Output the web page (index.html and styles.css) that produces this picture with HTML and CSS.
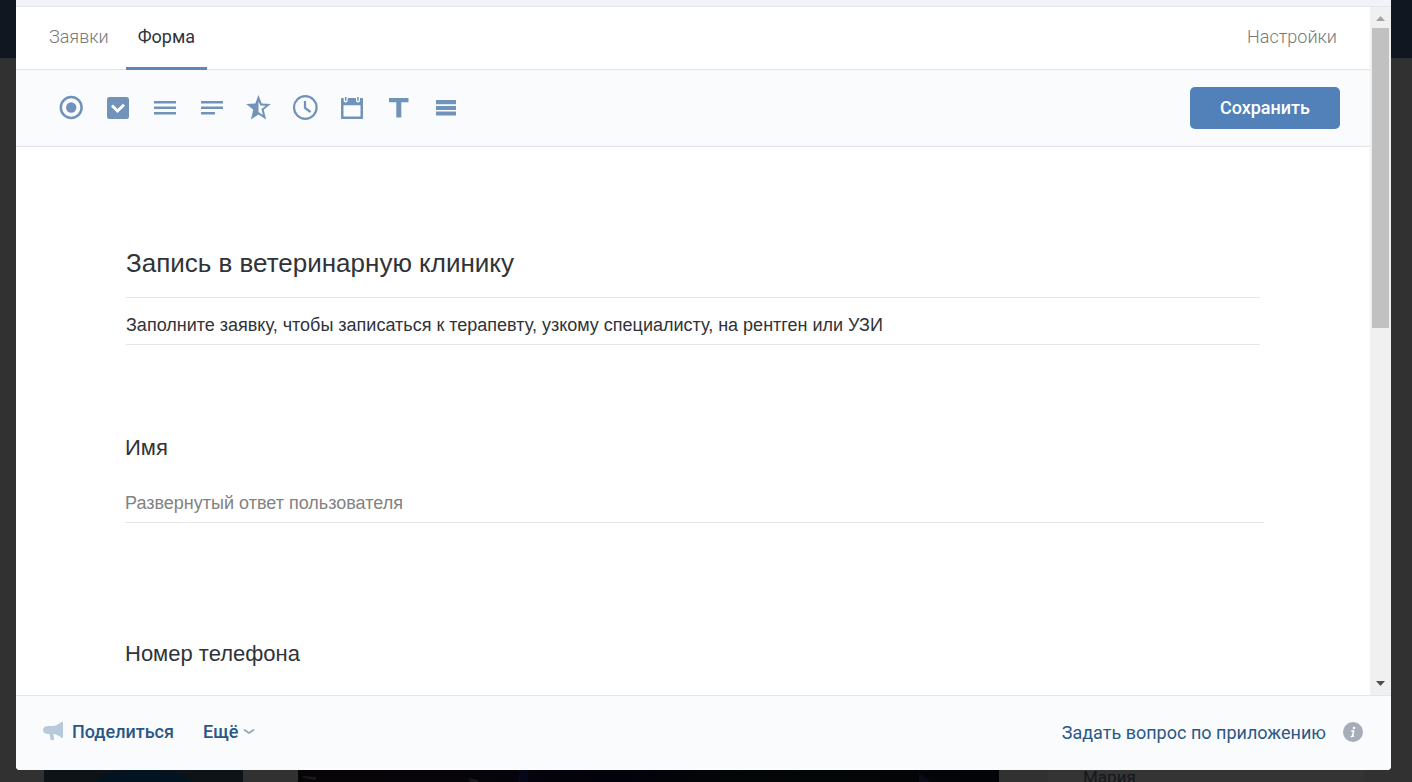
FILE: index.html
```html
<!DOCTYPE html>
<html lang="ru">
<head>
<meta charset="utf-8">
<title>Форма</title>
<link rel="stylesheet" href="styles.css">
</head>
<body>
<div class="page">
  <div class="backdrop" aria-hidden="true">
    <div class="backdrop-header"></div>
    <div class="backdrop-content">
      <div class="backdrop-photo"></div>
      <div class="backdrop-cover">
        <svg width="100%" height="12" viewBox="0 0 700 12" preserveAspectRatio="none">
          <path d="M4 6l14 1v3l-12-2zM170 8l10 2v2h-8z" fill="#19191c"/>
          <path d="M220 0h10v12h-10z" fill="#07071a"/>
          <path d="M620 3l12 9h-12z" fill="#0a0a1c"/>
        </svg>
      </div>
      <div class="backdrop-card">Мария</div>
    </div>
  </div>

  <main class="modal">
    <div class="strip"></div>
    <div class="viewport">
      <div class="content">
        <nav class="tabs">
          <a class="tab" href="#requests">Заявки</a>
          <a class="tab tab-active" href="#form">Форма</a>
          <a class="tab tab-settings" href="#settings">Настройки</a>
        </nav>

        <div class="toolbar">
          <div class="tools">
            <button class="tool" type="button" aria-label="Один вариант"><svg viewBox="0 0 26 26"><circle cx="13.200" cy="12.500" r="10.400" fill="none" stroke="currentColor" stroke-width="2.500"/><circle cx="13.200" cy="12.500" r="5.200" fill="currentColor"/></svg></button>
            <button class="tool" type="button" aria-label="Несколько вариантов"><svg viewBox="0 0 26 26"><rect x="2" y="2" width="22" height="22" rx="2.500" fill="currentColor"/><path d="M7 10.500l5.500 5.500 6.500-6.300" fill="none" stroke="#fff" stroke-width="2.800"/></svg></button>
            <button class="tool" type="button" aria-label="Развернутый ответ"><svg viewBox="0 0 26 26"><path d="M2 6h22v2.500H2zM2 11.500h22v2.500H2zM2 17h22v2.500H2z" fill="currentColor"/></svg></button>
            <button class="tool" type="button" aria-label="Короткий ответ"><svg viewBox="0 0 26 26"><path d="M2 6h22v2.500H2zM2 11.500h22v2.500H2zM2 17h14v2.500H2z" fill="currentColor"/></svg></button>
            <button class="tool" type="button" aria-label="Оценка"><svg viewBox="0 0 26 26"><path fill-rule="evenodd" d="M12.500 0l3.200 8.600 9.100.4-7.100 5.700 2.400 9.900-7.600-5.200-7.600 5.200 2.400-9.900L.2 9l9.100-.4zM12.500 6.500v10.600l4.400 3-1.400-6.100 4.200-3.300-5.300-.3z" fill="currentColor"/></svg></button>
            <button class="tool" type="button" aria-label="Время"><svg viewBox="0 0 26 26" fill="none" stroke="currentColor" stroke-width="2.200"><circle cx="12.300" cy="12.500" r="11.300"/><path d="M12 6v7l5.500 4"/></svg></button>
            <button class="tool" type="button" aria-label="Дата"><svg viewBox="0 0 26 26"><path fill-rule="evenodd" d="M2 3h20q1 0 1 1v19q0 1-1 1H2q-1 0-1-1V4q0-1 1-1zM3.500 10.300v11.200h17V10.300z" fill="currentColor"/><path d="M5.700 1.500v4M18 1.500v4" stroke="#fafbfd" stroke-width="4" stroke-linecap="round"/><path d="M5.700 2v3.800M18 2v3.800" stroke="currentColor" stroke-width="1.600"/></svg></button>
            <button class="tool" type="button" aria-label="Текст"><svg viewBox="0 0 26 26"><path d="M2 3h19.500v4.200H14.300V22.600h-5V7.200H2z" fill="currentColor"/></svg></button>
            <button class="tool" type="button" aria-label="Список"><svg viewBox="0 0 26 26"><path d="M2 5h20v4.300H2zM2 11h20v4H2zM2 16.500h20v3.900H2z" fill="currentColor"/></svg></button>
          </div>
          <button class="save" type="button">Сохранить</button>
        </div>

        <form class="form">
          <div class="intro">
            <input class="field form-title" type="text" aria-label="Название формы" value="Запись в ветеринарную клинику">
            <input class="field form-description" type="text" aria-label="Описание формы" value="Заполните заявку, чтобы записаться к терапевту, узкому специалисту, на рентген или УЗИ">
          </div>
          <div class="question">
            <label class="question-label" for="name">Имя</label>
            <input class="field answer" id="name" type="text" placeholder="Развернутый ответ пользователя">
          </div>
          <div class="question">
            <label class="question-label" for="phone">Номер телефона</label>
            <input class="field answer" id="phone" type="text">
          </div>
        </form>
      </div>

      <div class="scrollbar" aria-hidden="true">
        <svg class="arrow" viewBox="0 0 21 21"><path d="M6 14h9l-4.500-5z" fill="#a3a3a3"/></svg>
        <div class="track"><div class="thumb"></div></div>
        <svg class="arrow" viewBox="0 0 21 21"><path d="M6 7h9l-4.500 5z" fill="#505050"/></svg>
      </div>
    </div>

    <footer class="footer">
      <button class="action" type="button">
        <svg class="horn" viewBox="0 0 22 22"><path d="M6.500 6H10C14 6 17 4 19 2.200Q21 1 21 3v14q0 1.500-1.500.800C17.500 16 15 14.300 11.200 13.900l.9 5.200q.1.700-.6.800l-1.900.3q-.6.100-.8-.5L7.500 14H6C3 14 1 12.500 1 10s2-4 5.500-4z" fill="#b9c9dc"/></svg>
        Поделиться
      </button>
      <button class="action" type="button">
        Ещё
        <svg class="chevron" viewBox="0 0 12 12"><path d="M1.500 5l4.500 3 4.500-3" fill="none" stroke="#93a5bb" stroke-width="1.700" stroke-linecap="round" stroke-linejoin="round"/></svg>
      </button>
      <a class="ask" href="#ask">Задать вопрос по приложению</a>
      <button class="info" type="button" aria-label="Информация"><svg viewBox="0 0 20 20"><circle cx="10" cy="10" r="10" fill="#a6adb8"/><circle cx="11" cy="6" r="1.300" fill="#fff"/><path d="M8.200 9h2.400l-1 5.300h1.400M7.700 14.500h2" fill="none" stroke="#fff" stroke-width="1.500"/></svg></button>
    </footer>
  </main>
</div>
</body>
</html>
```
FILE: styles.css
```css
* {
  box-sizing: border-box;
}

body {
  margin: 0;
  font-family: Roboto, "Liberation Sans", sans-serif;
  font-size: 18px;
}

button {
  border: 0;
  padding: 0;
  background: none;
  font: inherit;
  cursor: pointer;
}

a {
  text-decoration: none;
}

.page {
  position: relative;
  display: flex;
  height: 100vh;
  padding: 0 21px 12px 16px;
  overflow: hidden;
  background: #303130;
}

.backdrop {
  position: absolute;
  inset: 0;
  display: flex;
  flex-direction: column;
  justify-content: space-between;
}

.backdrop-header {
  height: 58px;
  background: #101721;
}

.backdrop-content {
  display: flex;
  height: 12px;
  padding: 0 48px 0 44px;
}

.backdrop-photo {
  width: 199px;
  margin-right: 55px;
  background: radial-gradient(ellipse 50px 14px at 50% 100%, #031421 90%, #0d1316 100%);
}

.backdrop-cover {
  flex: 1;
  margin-right: 49px;
  background: linear-gradient(90deg, #070507, #07050b 25%, #02020c 45%, #040707 65%, #030407);
}

.backdrop-cover svg {
  display: block;
}

.backdrop-card {
  width: 316px;
  padding-left: 35px;
  background: #343434;
  color: #14181d;
  font-size: 17px;
  line-height: 14px;
}

.modal {
  position: relative;
  display: flex;
  flex: 1;
  flex-direction: column;
  min-width: 0;
  overflow: hidden;
  border-radius: 0 0 4px 4px;
  background: #fff;
}

.strip {
  height: 7px;
  border-bottom: 1px solid #e4e6eb;
  background: #f2f3f8;
}

.viewport {
  display: flex;
  flex: 1;
  min-height: 0;
}

.content {
  flex: 1;
  min-width: 0;
  overflow: hidden;
}

.tabs {
  display: flex;
  height: 63px;
  padding: 0 21px;
  border-bottom: 1px solid #dfe2e7;
}

.tab {
  height: 63px;
  padding: 0 12px;
  border-bottom: 3px solid transparent;
  color: #76787a;
  font-weight: 300;
  line-height: 60px;
}

.tab-active {
  margin-left: 5px;
  border-color: #6287ae;
  color: #303338;
  font-weight: 400;
}

.tab-settings {
  margin-left: auto;
}

.toolbar {
  display: flex;
  align-items: center;
  justify-content: space-between;
  height: 77px;
  padding: 0 30px 0 42px;
  border-bottom: 1px solid #dfe2e7;
  background: #fafbfd;
}

.tools {
  display: flex;
  gap: 21px;
}

.tool {
  width: 26px;
  height: 26px;
  color: #7293b9;
}

.tool svg,
.info svg {
  display: block;
}

.save {
  height: 42px;
  padding: 0 30px 2px;
  border-radius: 5px;
  background: #5181b8;
  color: #fff;
  font-weight: 500;
}

.form {
  padding: 90px 106px 0 109px;
  font-family: "Liberation Sans", Arial, sans-serif;
}

.intro {
  display: flex;
  flex-direction: column;
  padding: 0 4px 0 1px;
}

.field {
  display: block;
  width: 100%;
  padding: 0;
  border: 0;
  border-bottom: 1px solid #e5e6e8;
  border-radius: 0;
  outline: 0;
  background: transparent;
  color: #303338;
  font-family: inherit;
}

.form-title {
  height: 61px;
  padding-bottom: 8px;
  font-size: 26px;
}

.form-description {
  height: 47px;
  padding-top: 8px;
  font-size: 18px;
}

.question {
  padding: 90px 0 28px;
}

.question-label {
  display: block;
  color: #303338;
  font-size: 22px;
  line-height: 26px;
}

.answer {
  height: 40px;
  margin-top: 22px;
  padding-top: 2px;
  font-size: 18px;
}

.answer::placeholder {
  color: #828282;
  opacity: 1;
}

.scrollbar {
  display: flex;
  flex-direction: column;
  width: 21px;
  background: #f0f0f0;
}

.arrow {
  flex: none;
  width: 21px;
  height: 21px;
}

.track {
  flex: 1;
  padding: 0 2px;
}

.thumb {
  height: 300px;
  background: #c1c1c1;
}

.footer {
  display: flex;
  align-items: center;
  height: 75px;
  padding: 0 28px 2px 26px;
  border-top: 1px solid #e4e6e9;
  background: #fafbfd;
}

.action {
  display: flex;
  align-items: center;
  margin-right: 29px;
  padding-bottom: 2px;
  color: #2a5885;
  font-weight: 500;
}

.horn {
  width: 22px;
  height: 22px;
  margin-right: 8px;
}

.chevron {
  width: 12px;
  height: 12px;
  margin-left: 5px;
}

.ask {
  margin-left: auto;
  color: #2a5885;
}

.info {
  width: 20px;
  height: 20px;
  margin-left: 17px;
}
```
